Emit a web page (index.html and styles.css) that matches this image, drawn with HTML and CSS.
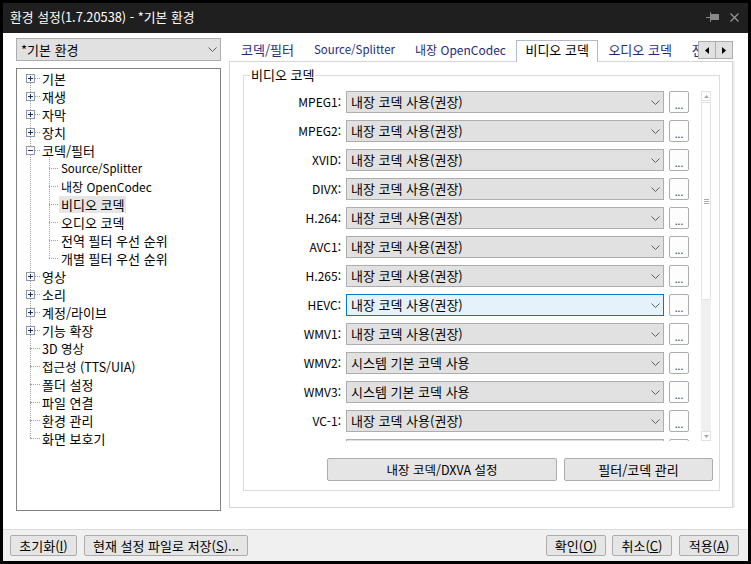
FILE: index.html
```html
<!DOCTYPE html>
<html lang="ko">
<head>
<meta charset="utf-8">
<title>환경 설정</title>
<link rel="stylesheet" href="styles.css">
</head>
<body>
<div class="window">
  <div class="titlebar">
    <span class="title">환경 설정(1.7.20538) - *기본 환경</span>
    <span class="tb-icons">
      <svg class="pin" width="13" height="10" viewBox="0 0 13 10"><path d="M0 5.5h4" stroke="#8a8a8a"/><rect x="4" y="0" width="1" height="10" fill="#8a8a8a"/><rect x="5" y="2" width="8" height="6" fill="#8a8a8a"/></svg>
      <svg class="close" width="9" height="9" viewBox="0 0 9 9"><path d="M0.5 0.5L8.5 8.5M8.5 0.5L0.5 8.5" stroke="#9a9a9a" stroke-width="1.1"/></svg>
    </span>
  </div>
  <div class="client">
    <div class="main">
      <div class="left">
        <div class="combo combo-top"><span class="combo-text">*기본 환경</span><svg class="chev" width="9" height="5" viewBox="0 0 9 5"><path d="M0.5 0.5L4.5 4.5L8.5 0.5" fill="none" stroke="#606060"/></svg></div>
        <div class="tree">
          <div class="row"><svg class="exp" width="9" height="9" viewBox="0 0 9 9"><rect x=".5" y=".5" width="8" height="8" fill="#fff" stroke="#8f97a8"/><path d="M2 4.5h5M4.5 2v5" stroke="#1c2f7a"/></svg><span class="hl"></span><span class="lbl">기본</span></div>
          <div class="row"><svg class="exp" width="9" height="9" viewBox="0 0 9 9"><rect x=".5" y=".5" width="8" height="8" fill="#fff" stroke="#8f97a8"/><path d="M2 4.5h5M4.5 2v5" stroke="#1c2f7a"/></svg><span class="hl"></span><span class="lbl">재생</span></div>
          <div class="row"><svg class="exp" width="9" height="9" viewBox="0 0 9 9"><rect x=".5" y=".5" width="8" height="8" fill="#fff" stroke="#8f97a8"/><path d="M2 4.5h5M4.5 2v5" stroke="#1c2f7a"/></svg><span class="hl"></span><span class="lbl">자막</span></div>
          <div class="row"><svg class="exp" width="9" height="9" viewBox="0 0 9 9"><rect x=".5" y=".5" width="8" height="8" fill="#fff" stroke="#8f97a8"/><path d="M2 4.5h5M4.5 2v5" stroke="#1c2f7a"/></svg><span class="hl"></span><span class="lbl">장치</span></div>
          <div class="row"><svg class="exp" width="9" height="9" viewBox="0 0 9 9"><rect x=".5" y=".5" width="8" height="8" fill="#fff" stroke="#8f97a8"/><path d="M2 4.5h5" stroke="#1c2f7a"/></svg><span class="hl"></span><span class="lbl">코덱/필터</span></div>
          <div class="row child"><span class="hl hl-c"></span><span class="lbl latin">Source/Splitter</span></div>
          <div class="row child"><span class="hl hl-c"></span><span class="lbl mixed">내장 OpenCodec</span></div>
          <div class="row child"><span class="hl hl-c"></span><span class="lbl sel">비디오 코덱</span></div>
          <div class="row child"><span class="hl hl-c"></span><span class="lbl">오디오 코덱</span></div>
          <div class="row child"><span class="hl hl-c"></span><span class="lbl">전역 필터 우선 순위</span></div>
          <div class="row child"><span class="hl hl-c"></span><span class="lbl">개별 필터 우선 순위</span></div>
          <div class="row"><svg class="exp" width="9" height="9" viewBox="0 0 9 9"><rect x=".5" y=".5" width="8" height="8" fill="#fff" stroke="#8f97a8"/><path d="M2 4.5h5M4.5 2v5" stroke="#1c2f7a"/></svg><span class="hl"></span><span class="lbl">영상</span></div>
          <div class="row"><svg class="exp" width="9" height="9" viewBox="0 0 9 9"><rect x=".5" y=".5" width="8" height="8" fill="#fff" stroke="#8f97a8"/><path d="M2 4.5h5M4.5 2v5" stroke="#1c2f7a"/></svg><span class="hl"></span><span class="lbl">소리</span></div>
          <div class="row"><svg class="exp" width="9" height="9" viewBox="0 0 9 9"><rect x=".5" y=".5" width="8" height="8" fill="#fff" stroke="#8f97a8"/><path d="M2 4.5h5M4.5 2v5" stroke="#1c2f7a"/></svg><span class="hl"></span><span class="lbl">계정/라이브</span></div>
          <div class="row"><svg class="exp" width="9" height="9" viewBox="0 0 9 9"><rect x=".5" y=".5" width="8" height="8" fill="#fff" stroke="#8f97a8"/><path d="M2 4.5h5M4.5 2v5" stroke="#1c2f7a"/></svg><span class="hl"></span><span class="lbl">기능 확장</span></div>
          <div class="row leaf"><span class="hl hl-l"></span><span class="lbl half">3D 영상</span></div>
          <div class="row leaf"><span class="hl hl-l"></span><span class="lbl half">접근성 (TTS/UIA)</span></div>
          <div class="row leaf"><span class="hl hl-l"></span><span class="lbl">폴더 설정</span></div>
          <div class="row leaf"><span class="hl hl-l"></span><span class="lbl">파일 연결</span></div>
          <div class="row leaf"><span class="hl hl-l"></span><span class="lbl">환경 관리</span></div>
          <div class="row leaf"><span class="hl hl-l"></span><span class="lbl">화면 보호기</span></div>
        </div>
      </div>
      <div class="right">
        <div class="tabbar">
          <div class="tabs">
            <div class="tab">코덱/필터</div>
            <div class="tab latin">Source/Splitter</div>
            <div class="tab mixed">내장 OpenCodec</div>
            <div class="tab active">비디오 코덱</div>
            <div class="tab">오디오 코덱</div>
            <div class="tab">전역 필터 우선 순위</div>
          </div>
          <div class="tabscroll">
            <div class="sbtn"><svg width="4" height="7" viewBox="0 0 4 7"><path d="M4 0V7L0 3.5Z" fill="#000"/></svg></div>
            <div class="sbtn sbtn-r"><svg width="4" height="7" viewBox="0 0 4 7"><path d="M0 0V7L4 3.5Z" fill="#000"/></svg></div>
          </div>
        </div>
        <div class="panel">
          <div class="group">
            <div class="group-title">비디오 코덱</div>
            <div class="scrollarea">
              <div class="list">
                <div class="lab">MPEG1:</div><div class="combo"><span class="combo-text">내장 코덱 사용(권장)</span><svg class="chev" width="9" height="5" viewBox="0 0 9 5"><path d="M0.5 0.5L4.5 4.5L8.5 0.5" fill="none" stroke="#606060"/></svg></div><div class="more">...</div>
                <div class="lab">MPEG2:</div><div class="combo"><span class="combo-text">내장 코덱 사용(권장)</span><svg class="chev" width="9" height="5" viewBox="0 0 9 5"><path d="M0.5 0.5L4.5 4.5L8.5 0.5" fill="none" stroke="#606060"/></svg></div><div class="more">...</div>
                <div class="lab">XVID:</div><div class="combo"><span class="combo-text">내장 코덱 사용(권장)</span><svg class="chev" width="9" height="5" viewBox="0 0 9 5"><path d="M0.5 0.5L4.5 4.5L8.5 0.5" fill="none" stroke="#606060"/></svg></div><div class="more">...</div>
                <div class="lab">DIVX:</div><div class="combo"><span class="combo-text">내장 코덱 사용(권장)</span><svg class="chev" width="9" height="5" viewBox="0 0 9 5"><path d="M0.5 0.5L4.5 4.5L8.5 0.5" fill="none" stroke="#606060"/></svg></div><div class="more">...</div>
                <div class="lab">H.264:</div><div class="combo"><span class="combo-text">내장 코덱 사용(권장)</span><svg class="chev" width="9" height="5" viewBox="0 0 9 5"><path d="M0.5 0.5L4.5 4.5L8.5 0.5" fill="none" stroke="#606060"/></svg></div><div class="more">...</div>
                <div class="lab">AVC1:</div><div class="combo"><span class="combo-text">내장 코덱 사용(권장)</span><svg class="chev" width="9" height="5" viewBox="0 0 9 5"><path d="M0.5 0.5L4.5 4.5L8.5 0.5" fill="none" stroke="#606060"/></svg></div><div class="more">...</div>
                <div class="lab">H.265:</div><div class="combo"><span class="combo-text">내장 코덱 사용(권장)</span><svg class="chev" width="9" height="5" viewBox="0 0 9 5"><path d="M0.5 0.5L4.5 4.5L8.5 0.5" fill="none" stroke="#606060"/></svg></div><div class="more">...</div>
                <div class="lab">HEVC:</div><div class="combo focus"><span class="combo-text">내장 코덱 사용(권장)</span><svg class="chev" width="9" height="5" viewBox="0 0 9 5"><path d="M0.5 0.5L4.5 4.5L8.5 0.5" fill="none" stroke="#606060"/></svg></div><div class="more">...</div>
                <div class="lab">WMV1:</div><div class="combo"><span class="combo-text">내장 코덱 사용(권장)</span><svg class="chev" width="9" height="5" viewBox="0 0 9 5"><path d="M0.5 0.5L4.5 4.5L8.5 0.5" fill="none" stroke="#606060"/></svg></div><div class="more">...</div>
                <div class="lab">WMV2:</div><div class="combo"><span class="combo-text">시스템 기본 코덱 사용</span><svg class="chev" width="9" height="5" viewBox="0 0 9 5"><path d="M0.5 0.5L4.5 4.5L8.5 0.5" fill="none" stroke="#606060"/></svg></div><div class="more">...</div>
                <div class="lab">WMV3:</div><div class="combo"><span class="combo-text">시스템 기본 코덱 사용</span><svg class="chev" width="9" height="5" viewBox="0 0 9 5"><path d="M0.5 0.5L4.5 4.5L8.5 0.5" fill="none" stroke="#606060"/></svg></div><div class="more">...</div>
                <div class="lab">VC-1:</div><div class="combo"><span class="combo-text">내장 코덱 사용(권장)</span><svg class="chev" width="9" height="5" viewBox="0 0 9 5"><path d="M0.5 0.5L4.5 4.5L8.5 0.5" fill="none" stroke="#606060"/></svg></div><div class="more">...</div>
                <div class="lab"></div><div class="combo"></div><div class="more"></div>
              </div>
              <div class="vscroll">
                <div class="varrow"><svg width="5" height="3" viewBox="0 0 5 3"><path d="M0 3L2.5 0L5 3Z" fill="#a8a8a8"/></svg></div>
                <div class="thumb"><svg width="5" height="5" viewBox="0 0 5 5"><path d="M0 0.5h5M0 2.5h5M0 4.5h5" stroke="#a8a8a8"/></svg></div>
                <div class="track"></div>
                <div class="varrow"><svg width="5" height="3" viewBox="0 0 5 3"><path d="M0 0L2.5 3L5 0Z" fill="#a8a8a8"/></svg></div>
              </div>
            </div>
            <div class="group-buttons">
              <div class="btn btn-dxva">내장 코덱/DXVA 설정</div>
              <div class="btn btn-filter">필터/코덱 관리</div>
            </div>
          </div>
        </div>
      </div>
    </div>
    <div class="bottombar">
      <div class="btn b-reset">초기화(<u>I</u>)</div>
      <div class="btn b-save">현재 설정 파일로 저장(<u>S</u>)...</div>
      <div class="spacer"></div>
      <div class="btn b-ok">확인(<u>O</u>)</div>
      <div class="btn b-cancel">취소(<u>C</u>)</div>
      <div class="btn b-apply">적용(<u>A</u>)</div>
    </div>
  </div>
</div>
</body>
</html>
```

FILE: styles.css
```css
* { box-sizing: border-box; }
html, body { margin: 0; padding: 0; }
body {
  width: 751px;
  height: 564px;
  background: #000;
  overflow: hidden;
  font-family: "Noto Sans CJK KR", "Noto Sans", sans-serif;
  font-size: 13px;
  color: #000;
}
.window {
  margin: 3px 3px 0 3px;
  height: 558px;
  display: flex;
  flex-direction: column;
}
.titlebar {
  height: 30px;
  flex: none;
  background: #1f1f1f;
  display: flex;
  align-items: center;
  padding: 0 9px 3px 7px;
  color: #fff;
}
.title { flex: 1; font-size: 12.8px; line-height: 16px; white-space: nowrap; }
.tb-icons { display: flex; align-items: center; gap: 11px; padding-top: 1px; }
.tb-icons svg { display: block; }

.client {
  flex: 1;
  background: #fff;
  display: flex;
  flex-direction: column;
}
.main {
  height: 496px;
  display: flex;
  padding: 5px 0 0 13px;
  gap: 8px;
}
.left {
  width: 205px;
  display: flex;
  flex-direction: column;
  gap: 7px;
}
.combo {
  display: flex;
  align-items: center;
  height: 22px;
  border: 1px solid #adadad;
  background: #e1e1e1;
  padding: 0 3px 0 4px;
  white-space: nowrap;
  overflow: hidden;
}
.combo-top { height: 23px; flex: none; }
.combo-text { flex: 1; line-height: 18px; }
.chev { display: block; flex: none; }
.combo.focus { border-color: #0078d7; background: #e5f1fb; }

.latin { font-size: 11.5px; }
.mixed { font-size: 12px; }
.half { font-size: 12.5px; }

.tree {
  height: 443px;
  flex: none;
  border: 1px solid #828282;
  background:
    repeating-linear-gradient(to bottom, #a0a0a0 0 1px, transparent 1px 2px) 13px 8px / 1px 361px no-repeat,
    repeating-linear-gradient(to bottom, #a0a0a0 0 1px, transparent 1px 2px) 32px 86px / 1px 104px no-repeat,
    #fff;
}
.row {
  display: flex;
  align-items: center;
  height: 18px;
  padding-left: 9px;
  white-space: nowrap;
}
.exp { display: block; flex: none; }
.hl { width: 5px; height: 0; border-top: 1px dotted #a0a0a0; flex: none; }
.lbl { margin-left: 2px; line-height: 17px; }
.row.child { padding-left: 32px; }
.hl-c { width: 9px; }
.row.child .lbl { margin-left: 1px; padding: 0 2px; }
.row.leaf { padding-left: 13px; }
.hl-l { width: 10px; }
.lbl.sel { background: #e6e6e6; }

.right {
  width: 504px;
  display: flex;
  flex-direction: column;
}
.tabbar {
  height: 24px;
  display: flex;
}
.tabs {
  flex: 1;
  display: flex;
  align-items: flex-end;
  overflow: hidden;
  padding-left: 2px;
}
.tab {
  flex: none;
  height: 22px;
  line-height: 19px;
  padding: 0 10px;
  white-space: nowrap;
  color: #1f2a7c;
}
.tab.active {
  position: relative;
  z-index: 1;
  color: #000;
  background: #fff;
  border: 1px solid #b3bacb;
  border-bottom: none;
  padding: 0 8.5px;
  line-height: 18px;
}
.tabscroll {
  display: flex;
  margin-top: 3px;
  height: 18px;
}
.sbtn {
  width: 18px;
  height: 18px;
  border: 1px solid #adadad;
  background: #e1e1e1;
  display: flex;
  align-items: center;
  justify-content: center;
}
.sbtn svg { display: block; }
.sbtn-r { margin-left: -1px; }

.panel {
  height: 447px;
  margin-top: -1px;
  border: 1px solid #d5d5d5;
  box-shadow: 2px 0 0 #efefef;
  padding: 13px 12px 16px 13px;
  display: flex;
  flex-direction: column;
}
.group {
  flex: 1;
  border: 1px solid #dcdcdc;
  display: flex;
  flex-direction: column;
  padding-bottom: 9px;
}
.group-title {
  align-self: flex-start;
  margin: -9px 0 0 6px;
  padding: 0 1px;
  background: #fff;
  line-height: 16px;
}
.scrollarea {
  margin-top: 8px;
  height: 350px;
  display: flex;
  gap: 12px;
}
.list {
  width: 445px;
  height: 350px;
  overflow: hidden;
  display: grid;
  grid-template-columns: 97px 318px 20px;
  grid-auto-rows: 22px;
  column-gap: 5px;
  row-gap: 7px;
  align-content: start;
}
.lab { text-align: right; line-height: 21px; white-space: nowrap; font-size: 12px; }
.more {
  border: 1px solid #adadad;
  border-radius: 2px;
  background: #fdfdfd;
  font-size: 10px;
  line-height: 10px;
  text-align: center;
  padding-top: 8px;
  color: #333;
}
.vscroll {
  width: 10px;
  display: flex;
  flex-direction: column;
}
.varrow {
  height: 10px;
  border: 1px solid #e2e2e2;
  background: #fdfdfd;
  display: flex;
  align-items: center;
  justify-content: center;
}
.varrow svg, .thumb svg { display: block; }
.thumb {
  height: 198px;
  margin-top: 1px;
  background: #fff;
  border: 1px solid #e3e3e3;
  display: flex;
  align-items: center;
  justify-content: center;
}
.track { flex: 1; background: #f0f0f0; }

.group-buttons {
  margin-top: 17px;
  display: flex;
  justify-content: flex-end;
  gap: 7px;
  padding-right: 6px;
}
.btn {
  height: 23px;
  border: 1px solid #adadad;
  border-radius: 2px;
  background: #e5e5e5;
  display: flex;
  align-items: center;
  justify-content: center;
  line-height: 18px;
  white-space: nowrap;
}
.btn-dxva { width: 230px; font-size: 12.5px; }
.btn-filter { width: 149px; }

.bottombar {
  flex: 1;
  background: #f0f0f0;
  border-top: 1px solid #dadada;
  display: flex;
  align-items: flex-start;
  padding: 5px 9px 0 7px;
  gap: 7px;
}
.bottombar .btn { height: 21px; }
.spacer { flex: 1; }
.b-reset { width: 67px; }
.b-save { width: 164px; }
.b-ok { width: 60px; }
.b-cancel { width: 60px; margin-left: -1px; }
.b-apply { width: 60px; }
```
